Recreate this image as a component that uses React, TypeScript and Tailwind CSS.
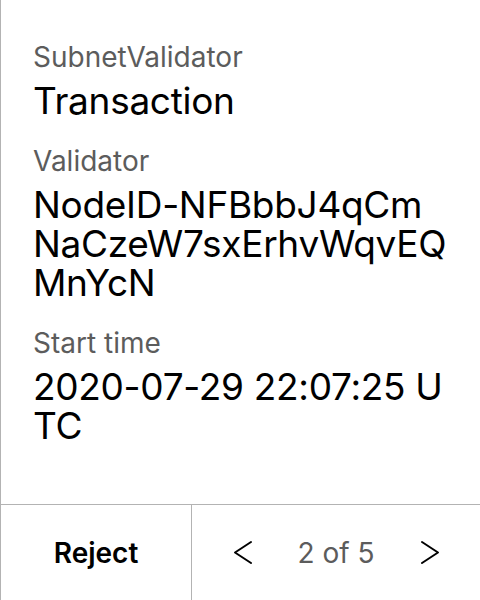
const fields = [
    { label: "SubnetValidator", lines: ["Transaction"] },
    { label: "Validator", lines: ["NodeID-NFBbbJ4qCm", "NaCzeW7sxErhvWqvEQ", "MnYcN"] },
    { label: "Start time", lines: ["2020-07-29 22:07:25 U", "TC"] },
];

function Chevron({ flip }: { flip?: boolean }) {
    return (
        <svg width="20" height="25" viewBox="0 0 20 25" fill="none" stroke="#000" strokeWidth="2" strokeLinecap="round" strokeLinejoin="round" className={flip ? "rotate-180" : ""}>
            <polyline points="18,2 2,12.5 18,23" />
        </svg>
    );
}

export default function App() {
    return (
        <div className="h-[600px] w-[480px] flex flex-col bg-white border-l border-[#b3b3b3] font-['Inter',sans-serif]">
            <div className="flex-1 flex flex-col gap-[24px] pt-[40px] pl-[32px] pr-[33px]">
                {fields.map((f) => (
                    <div key={f.label} className="flex flex-col gap-[7px]">
                        <span className="text-[28px] leading-[34px] text-[#5c5c5c]">{f.label}</span>
                        <div className="text-[37px] leading-[39px] tracking-[-0.3px] text-black">
                            {f.lines.map((l) => (
                                <div key={l} className="whitespace-nowrap">{l}</div>
                            ))}
                        </div>
                    </div>
                ))}
            </div>
            <div className="h-[96px] flex border-t border-[#b3b3b3]">
                <button className="w-[191px] border-r border-[#b3b3b3] text-[28px] font-semibold text-black">Reject</button>
                <div className="flex-1 flex items-center justify-center gap-[45px]">
                    <Chevron />
                    <span className="text-[28px] text-[#5c5c5c]">2 of 5</span>
                    <Chevron flip />
                </div>
            </div>
        </div>
    );
}
